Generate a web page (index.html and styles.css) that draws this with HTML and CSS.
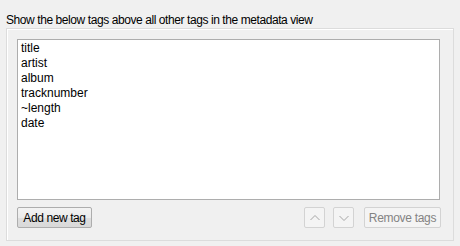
FILE: index.html
```html
<!DOCTYPE html>
<html>
<head>
<meta charset="utf-8">
<link rel="stylesheet" href="styles.css">
</head>
<body>
<div class="label">Show the below tags above all other tags in the metadata view</div>
<div class="group">
  <ul class="list">
    <li>title</li>
    <li>artist</li>
    <li>album</li>
    <li>tracknumber</li>
    <li>~length</li>
    <li>date</li>
  </ul>
  <div class="buttons">
    <button class="btn add">Add new tag</button>
    <span class="spacer"></span>
    <button class="btn arrow disabled up" disabled>
      <svg width="12" height="8" viewBox="0 0 12 8"><path d="M1.5 6 L6 1.5 L10.5 6" fill="none" stroke="#a6a6a6" stroke-width="1"/></svg>
    </button>
    <button class="btn arrow disabled down" disabled>
      <svg width="12" height="8" viewBox="0 0 12 8"><path d="M1.5 2 L6 6.5 L10.5 2" fill="none" stroke="#a6a6a6" stroke-width="1"/></svg>
    </button>
    <button class="btn remove disabled" disabled>Remove tags</button>
  </div>
</div>
</body>
</html>
```
FILE: styles.css
```css
html, body {
  margin: 0;
  padding: 0;
  background: #f0f0f0;
  font-family: "Liberation Sans", Arial, sans-serif;
  font-size: 12px;
  color: #000;
}
.label {
  margin: 13px 0 0 6px;
  height: 15px;
  line-height: 14px;
  letter-spacing: -0.42px;
}
.group {
  margin-left: 6px;
  width: 446px;
  height: 211px;
  border: 1px solid #dcdcdc;
  box-shadow: inset 1px 1px 0 #fff;
  box-sizing: content-box;
  padding: 0;
  display: flex;
  flex-direction: column;
}
.list {
  list-style: none;
  margin: 10px 0 0 10px;
  padding: 1px 0 0 3px;
  width: 418px;
  height: 158px;
  background: #fff;
  border: 1px solid #adadad;
}
.list li {
  height: 15px;
  line-height: 15px;
}
.buttons {
  display: flex;
  margin: 7px 0 0 10px;
  width: 424px;
  height: 21px;
}
.spacer { flex: 1; }
.btn {
  box-sizing: border-box;
  height: 21px;
  padding: 0;
  font-family: inherit;
  font-size: 12px;
  color: #000;
  border: 1px solid #adadad;
  border-radius: 2px;
  background: linear-gradient(#f3f3f3, #ebebeb 50%, #dedede 50%, #d9d9d9);
  display: flex;
  align-items: center;
  justify-content: center;
}
.add { width: 75px; letter-spacing: -0.4px; }
.btn.disabled {
  border-color: #d3d3d3;
  background: #f4f4f4;
  color: #838383;
}
.arrow { width: 21px; }
.up { margin-right: 8px; }
.down { margin-right: 10px; }
.remove { width: 77px; letter-spacing: -0.3px; }
```
